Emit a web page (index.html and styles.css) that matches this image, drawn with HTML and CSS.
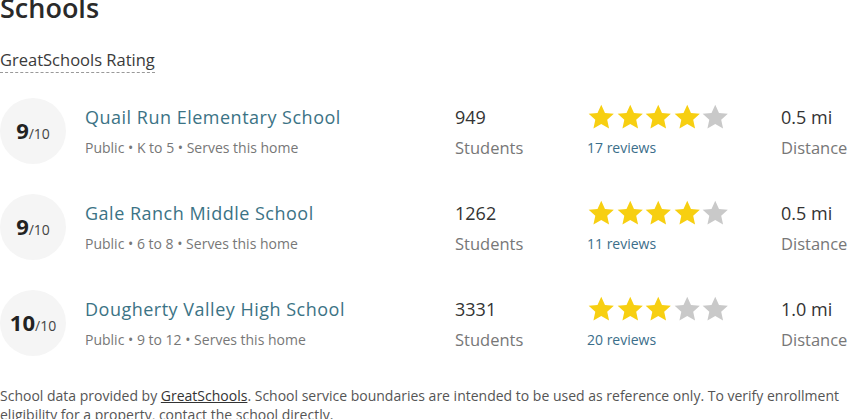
FILE: index.html
```html
<!DOCTYPE html>
<html lang="en">
<head>
  <meta charset="UTF-8" />
  <title>Schools</title>
  <link rel="stylesheet" href="styles.css">
</head>
<body>

  <h2 class="title">Schools</h2>
  <div class="rating-label"><span>GreatSchools Rating</span></div>

  <div class="school-list">
    <div class="school">
      <div class="score"><b>9</b><small>/10</small></div>
      <div class="info">
        <a class="name" href="#">Quail Run Elementary School</a>
        <div class="meta">Public • K to 5 • Serves this home</div>
      </div>
      <div class="stat">
        <div class="value">949</div>
        <div class="label">Students</div>
      </div>
      <div class="reviews">
        <div class="stars">
          <svg viewBox="0 0 24 24" class="on"><path d="M12 1.5l3.2 7 7.6.8-5.7 5.1 1.6 7.5L12 18l-6.7 3.9 1.6-7.5L1.2 9.3l7.6-.8z"/></svg>
          <svg viewBox="0 0 24 24" class="on"><path d="M12 1.5l3.2 7 7.6.8-5.7 5.1 1.6 7.5L12 18l-6.7 3.9 1.6-7.5L1.2 9.3l7.6-.8z"/></svg>
          <svg viewBox="0 0 24 24" class="on"><path d="M12 1.5l3.2 7 7.6.8-5.7 5.1 1.6 7.5L12 18l-6.7 3.9 1.6-7.5L1.2 9.3l7.6-.8z"/></svg>
          <svg viewBox="0 0 24 24" class="on"><path d="M12 1.5l3.2 7 7.6.8-5.7 5.1 1.6 7.5L12 18l-6.7 3.9 1.6-7.5L1.2 9.3l7.6-.8z"/></svg>
          <svg viewBox="0 0 24 24"><path d="M12 1.5l3.2 7 7.6.8-5.7 5.1 1.6 7.5L12 18l-6.7 3.9 1.6-7.5L1.2 9.3l7.6-.8z"/></svg>
        </div>
        <a class="count" href="#">17 reviews</a>
      </div>
      <div class="stat">
        <div class="value">0.5 mi</div>
        <div class="label">Distance</div>
      </div>
    </div>

    <div class="school">
      <div class="score"><b>9</b><small>/10</small></div>
      <div class="info">
        <a class="name" href="#">Gale Ranch Middle School</a>
        <div class="meta">Public • 6 to 8 • Serves this home</div>
      </div>
      <div class="stat">
        <div class="value">1262</div>
        <div class="label">Students</div>
      </div>
      <div class="reviews">
        <div class="stars">
          <svg viewBox="0 0 24 24" class="on"><path d="M12 1.5l3.2 7 7.6.8-5.7 5.1 1.6 7.5L12 18l-6.7 3.9 1.6-7.5L1.2 9.3l7.6-.8z"/></svg>
          <svg viewBox="0 0 24 24" class="on"><path d="M12 1.5l3.2 7 7.6.8-5.7 5.1 1.6 7.5L12 18l-6.7 3.9 1.6-7.5L1.2 9.3l7.6-.8z"/></svg>
          <svg viewBox="0 0 24 24" class="on"><path d="M12 1.5l3.2 7 7.6.8-5.7 5.1 1.6 7.5L12 18l-6.7 3.9 1.6-7.5L1.2 9.3l7.6-.8z"/></svg>
          <svg viewBox="0 0 24 24" class="on"><path d="M12 1.5l3.2 7 7.6.8-5.7 5.1 1.6 7.5L12 18l-6.7 3.9 1.6-7.5L1.2 9.3l7.6-.8z"/></svg>
          <svg viewBox="0 0 24 24"><path d="M12 1.5l3.2 7 7.6.8-5.7 5.1 1.6 7.5L12 18l-6.7 3.9 1.6-7.5L1.2 9.3l7.6-.8z"/></svg>
        </div>
        <a class="count" href="#">11 reviews</a>
      </div>
      <div class="stat">
        <div class="value">0.5 mi</div>
        <div class="label">Distance</div>
      </div>
    </div>

    <div class="school">
      <div class="score"><b>10</b><small>/10</small></div>
      <div class="info">
        <a class="name" href="#">Dougherty Valley High School</a>
        <div class="meta">Public • 9 to 12 • Serves this home</div>
      </div>
      <div class="stat">
        <div class="value">3331</div>
        <div class="label">Students</div>
      </div>
      <div class="reviews">
        <div class="stars">
          <svg viewBox="0 0 24 24" class="on"><path d="M12 1.5l3.2 7 7.6.8-5.7 5.1 1.6 7.5L12 18l-6.7 3.9 1.6-7.5L1.2 9.3l7.6-.8z"/></svg>
          <svg viewBox="0 0 24 24" class="on"><path d="M12 1.5l3.2 7 7.6.8-5.7 5.1 1.6 7.5L12 18l-6.7 3.9 1.6-7.5L1.2 9.3l7.6-.8z"/></svg>
          <svg viewBox="0 0 24 24" class="on"><path d="M12 1.5l3.2 7 7.6.8-5.7 5.1 1.6 7.5L12 18l-6.7 3.9 1.6-7.5L1.2 9.3l7.6-.8z"/></svg>
          <svg viewBox="0 0 24 24"><path d="M12 1.5l3.2 7 7.6.8-5.7 5.1 1.6 7.5L12 18l-6.7 3.9 1.6-7.5L1.2 9.3l7.6-.8z"/></svg>
          <svg viewBox="0 0 24 24"><path d="M12 1.5l3.2 7 7.6.8-5.7 5.1 1.6 7.5L12 18l-6.7 3.9 1.6-7.5L1.2 9.3l7.6-.8z"/></svg>
        </div>
        <a class="count" href="#">20 reviews</a>
      </div>
      <div class="stat">
        <div class="value">1.0 mi</div>
        <div class="label">Distance</div>
      </div>
    </div>
  </div>

  <p class="disclaimer">School data provided by <a href="#">GreatSchools</a>. School service boundaries are intended to be used as reference only. To verify enrollment<br>eligibility for a property, contact the school directly.</p>

</body>
</html>
```

FILE: styles.css
```css
body {
  margin: 0;
  width: 850px;
  height: 419px;
  overflow: hidden;
  font-family: "Open Sans", "Noto Sans", sans-serif;
  color: #333;
  background: #fff;
}

.title {
  margin: -9px 0 0;
  font-size: 27px;
  line-height: 34px;
  font-weight: 600;
  color: #2a2a2a;
}

.rating-label {
  margin-top: 25px;
  font-size: 16.5px;
  line-height: 20px;
  color: #3a3a3a;
}

.rating-label span {
  border-bottom: 1px dashed #999;
  padding-bottom: 1px;
}

.school-list {
  margin-top: 28px;
}

.school {
  display: grid;
  grid-template-columns: 85px 370px 132px 194px auto;
  align-items: center;
  height: 66px;
  margin-bottom: 30px;
}

.score {
  width: 66px;
  height: 66px;
  border-radius: 50%;
  background: #f5f5f5;
  display: flex;
  align-items: baseline;
  justify-content: center;
  padding-top: 20px;
  box-sizing: border-box;
}

.score b {
  font-size: 22px;
  line-height: 24px;
  font-weight: 700;
  color: #222;
}

.score small {
  font-size: 14px;
  color: #444;
}

.name {
  display: block;
  font-size: 18px;
  line-height: 24px;
  letter-spacing: 0.5px;
  color: #3b7385;
  text-decoration: none;
}

.meta {
  margin-top: 10px;
  font-size: 14px;
  line-height: 18px;
  color: #777;
}

.value {
  font-size: 18px;
  line-height: 24px;
  color: #333;
}

.label {
  margin-top: 10px;
  font-size: 16.5px;
  line-height: 18px;
  color: #777;
}

.stars {
  display: flex;
  height: 24px;
  margin-top: 1px;
}

.stars svg {
  width: 28.5px;
  height: 28px;
  margin-top: -3px;
  fill: #c9c9c9;
}

.stars svg.on {
  fill: #f7cf11;
}

.count {
  display: block;
  margin-top: 9px;
  font-size: 14px;
  line-height: 18px;
  color: #3b6e8a;
  text-decoration: none;
}

.disclaimer {
  margin: 28px 0 0;
  font-size: 14px;
  line-height: 19px;
  color: #555;
  white-space: nowrap;
}

.disclaimer a {
  color: #333;
}
```
